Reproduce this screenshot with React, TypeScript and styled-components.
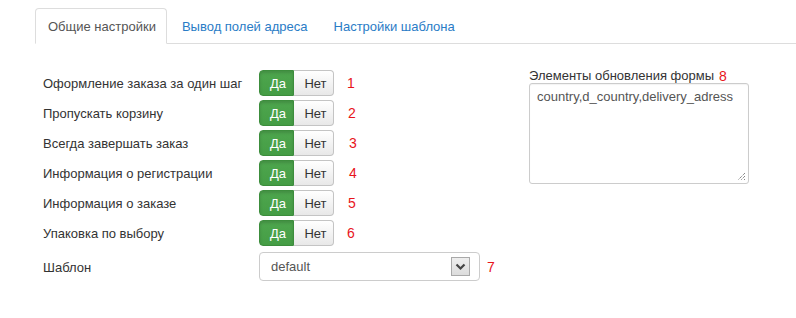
import { createGlobalStyle } from 'styled-components';
import styled from 'styled-components';

const GlobalStyle = createGlobalStyle`
  body {
    margin: 0;
    background: #fff;
    font-family: "Liberation Sans", Arial, sans-serif;
    font-size: 13px;
    color: #333;
  }
`;

const Page = styled.div`
  width: 796px;
  height: 318px;
  padding: 8px 0 0 35px;
  box-sizing: border-box;
`;

const TabBar = styled.div`
  display: flex;
  border-bottom: 1px solid #ddd;
  height: 35px;
`;

const Tab = styled.div<{ $active?: boolean }>`
  box-sizing: border-box;
  padding: 0 10px 0 12px;
  display: flex;
  align-items: center;
  color: ${(p) => (p.$active ? '#555' : '#2a7cc6')};
  background: #fff;
  border: 1px solid ${(p) => (p.$active ? '#ddd' : 'transparent')};
  border-bottom: ${(p) => (p.$active ? '1px solid #fff' : 'none')};
  border-radius: 4px 4px 0 0;
  margin-right: 2px;
  height: ${(p) => (p.$active ? '36px' : '35px')};
`;

const Body = styled.div`
  display: flex;
  padding: 26px 0 0 8px;
`;

const LeftColumn = styled.div`
  width: 486px;
  display: flex;
  flex-direction: column;
  gap: 4px;
`;

const Row = styled.div<{ $top?: number }>`
  display: flex;
  align-items: center;
  margin-top: ${(p) => p.$top ?? 0}px;
`;

const Label = styled.div`
  width: 216px;
  padding-top: 1px;
`;

const Toggle = styled.div`
  display: flex;
  height: 26px;
`;

const YesButton = styled.div`
  width: 35px;
  box-sizing: border-box;
  background: linear-gradient(#4ea64e, #459d45);
  border: 1px solid #3c8d3c;
  border-radius: 4px 0 0 4px;
  color: #fff;
  display: flex;
  align-items: center;
  justify-content: center;
  padding-left: 3px;
  box-shadow: inset 0 2px 3px rgba(0, 0, 0, 0.15);
`;

const NoButton = styled.div`
  width: 40px;
  box-sizing: border-box;
  background: linear-gradient(#fff, #e8e8e8);
  border: 1px solid #c4c4c4;
  border-left: none;
  border-radius: 0 4px 4px 0;
  color: #333;
  display: flex;
  align-items: center;
  justify-content: center;
  padding-left: 4px;
`;

const Num = styled.span<{ $left?: number }>`
  color: #e8141a;
  margin-left: ${(p) => p.$left ?? 13}px;
  font-size: 14px;
`;

const Select = styled.div`
  width: 221px;
  height: 29px;
  box-sizing: border-box;
  border: 1px solid #ccc;
  border-radius: 4px;
  display: flex;
  align-items: center;
  justify-content: space-between;
  padding: 0 9px 0 11px;
  color: #555;
  background: #fff;
`;

const Arrow = styled.div`
  width: 19px;
  height: 19px;
  box-sizing: border-box;
  border: 1px solid #a9a9a9;
  background: linear-gradient(#eee, #dcdcdc);
  display: flex;
  align-items: center;
  justify-content: center;
`;

const RightColumn = styled.div`
  display: flex;
  flex-direction: column;
  margin-top: -2px;
`;

const FieldLabel = styled.div`
  display: flex;
  align-items: center;
  height: 15px;
`;

const TextArea = styled.div`
  width: 220px;
  height: 101px;
  box-sizing: border-box;
  border: 1px solid #ccc;
  border-radius: 3px;
  padding: 5px 7px;
  color: #555;
  position: relative;
  box-shadow: inset 0 1px 1px rgba(0, 0, 0, 0.05);
`;

const Grip = styled.svg`
  position: absolute;
  right: 2px;
  bottom: 2px;
`;

const rows = [
  'Оформление заказа за один шаг',
  'Пропускать корзину',
  'Всегда завершать заказ',
  'Информация о регистрации',
  'Информация о заказе',
  'Упаковка по выбору',
];

const offsets = [13, 14, 15, 15, 14, 13];

export default function App() {
  return (
    <Page>
      <GlobalStyle />
      <TabBar>
        <Tab $active>Общие настройки</Tab>
        <Tab>Вывод полей адреса</Tab>
        <Tab>Настройки шаблона</Tab>
      </TabBar>
      <Body>
        <LeftColumn>
          {rows.map((label, i) => (
            <Row key={label}>
              <Label>{label}</Label>
              <Toggle>
                <YesButton>Да</YesButton>
                <NoButton>Нет</NoButton>
              </Toggle>
              <Num $left={offsets[i]}>{i + 1}</Num>
            </Row>
          ))}
          <Row $top={2}>
            <Label>Шаблон</Label>
            <Select>
              default
              <Arrow>
                <svg width="11" height="8" viewBox="0 0 11 8">
                  <path d="M1.5 1.5 L5.5 5.5 L9.5 1.5" fill="none" stroke="#444" strokeWidth="2.2" />
                </svg>
              </Arrow>
            </Select>
            <Num $left={7}>7</Num>
          </Row>
        </LeftColumn>
        <RightColumn>
          <FieldLabel>
            Элементы обновления формы
            <Num $left={5}>8</Num>
          </FieldLabel>
          <TextArea>
            country,d_country,delivery_adress
            <Grip width="9" height="9" viewBox="0 0 9 9">
              <path d="M8 1 L1 8 M8 4 L4 8 M8 7 L7 8" stroke="#555" strokeWidth="1" strokeDasharray="1 1" />
            </Grip>
          </TextArea>
        </RightColumn>
      </Body>
    </Page>
  );
}
